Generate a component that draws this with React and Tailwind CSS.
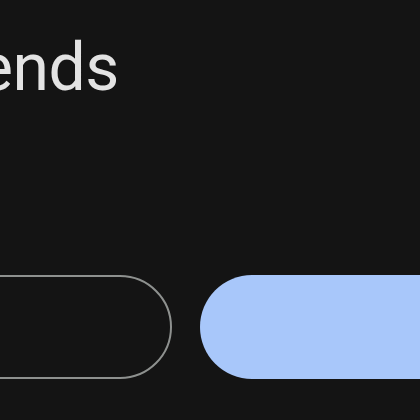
export default function App() {
  return (
    <div className="w-[420px] h-[420px] overflow-hidden bg-[#141414] flex flex-col" style={{ fontFamily: "Roboto, 'Noto Sans', sans-serif" }}>
      <div className="h-[30px] shrink-0" />
      <div className="ml-[-22px] text-[66px] leading-[76px] text-[#e3e3e3] whitespace-nowrap tracking-[-0.5px]">ends</div>
      <div className="h-[169px] shrink-0" />
      <div className="flex gap-[28px] ml-[-80px] shrink-0">
        <div className="w-[252px] h-[104px] shrink-0 rounded-full border-[2.5px] border-[#8e918f]" />
        <div className="w-[300px] h-[104px] shrink-0 rounded-full bg-[#a8c7fa]" />
      </div>
    </div>
  );
}
